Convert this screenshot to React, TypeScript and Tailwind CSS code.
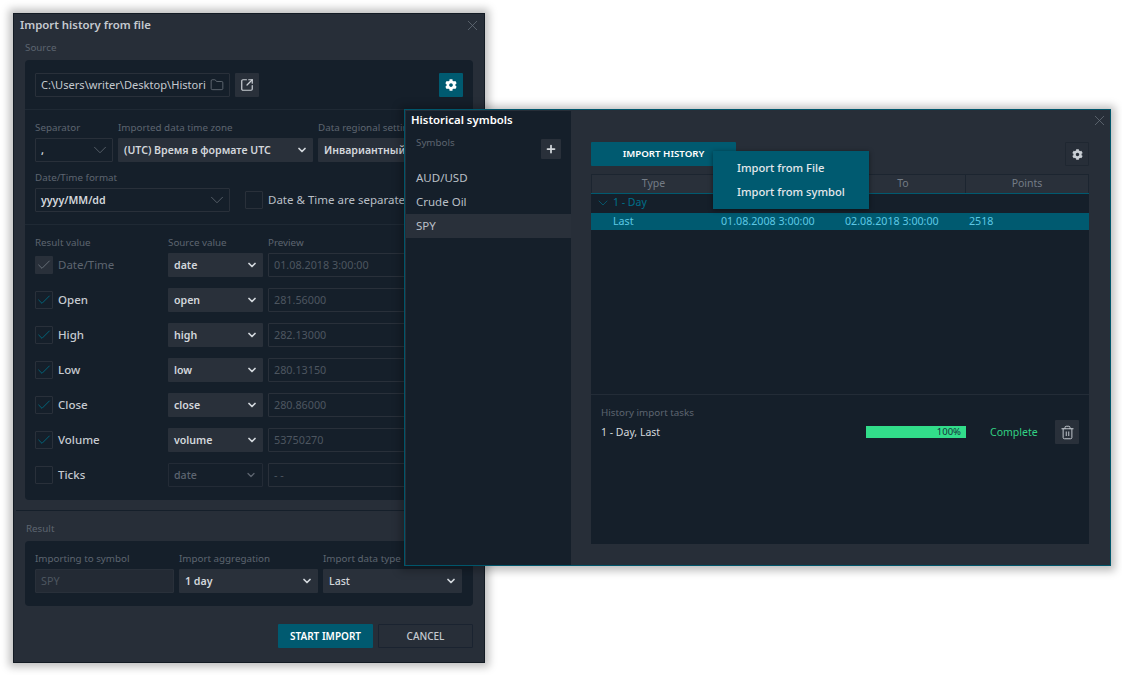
import React from "react";
import { ChevronDown, Check, Folder, SquareArrowOutUpRight, Plus, X, Trash2 } from "lucide-react";
import { FaCog } from "react-icons/fa";

const Lbl = ({ children, className = "" }: { children: React.ReactNode; className?: string }) => (
  <div className={"h-[14px] pt-[1px] text-[9.8px] leading-[14px] text-[#5d6570] whitespace-nowrap " + className}>{children}</div>
);

const Sel = ({ v, w, filled = true, dim = false, bold = true }: { v: string; w: string; filled?: boolean; dim?: boolean; bold?: boolean }) => (
  <div
    className={
      "h-6 shrink-0 flex items-center justify-between rounded-[1px] text-[10.6px] whitespace-nowrap overflow-hidden " +
      w +
      " " +
      (filled ? "bg-[#29303a] pl-[6px] pr-[5px] " : dim ? "border border-[#232b36] pl-[5px] pr-[5px] " : "border border-[#29303a] pl-[5px] pr-[1px] ") +
      (dim ? "text-[#5d6570] " : "text-[#d3d7dc] ") +
      (bold ? "font-semibold" : "font-medium")
    }
  >
    <span className="pt-[1px]">{v}</span>
    {filled || dim ? (
      <ChevronDown size={12} strokeWidth={dim ? 2.5 : 3.5} className={dim ? "text-[#5d6570]" : "text-[#d3d7dc]"} />
    ) : (
      <ChevronDown size={22} strokeWidth={0.8} className="text-[#6b737d]" />
    )}
  </div>
);

const Input = ({ v, w, dim = true }: { v: string; w: string; dim?: boolean }) => (
  <div className={"h-6 shrink-0 flex items-center px-[5px] border border-[#29303a] rounded-[1px] text-[10.8px] whitespace-nowrap overflow-hidden " + w + (dim ? " text-[#4d5660]" : " text-[#d3d7dc]")}>{v}</div>
);

const Box = ({ on = false, disabled = false }: { on?: boolean; disabled?: boolean }) => (
  <div className={"w-[18px] h-[18px] shrink-0 flex items-center justify-center rounded-[1px] " + (disabled ? "bg-[#29303a]" : "border border-[#29303a]")}>
    {on && <Check size={16} strokeWidth={1.4} className={disabled ? "text-[#6b737d]" : "text-[#00697f]"} />}
  </div>
);

const IconBtn = ({ children, teal = false, outline = false }: { children: React.ReactNode; teal?: boolean; outline?: boolean }) => (
  <div className={"w-6 h-6 shrink-0 flex items-center justify-center rounded-[1px] " + (teal ? "bg-[#005a70] text-white" : outline ? "border border-[#1f2731] text-[#c9ced4]" : "bg-[#29303a] text-[#c9ced4]")}>{children}</div>
);

const rows: [string, string, string, boolean, boolean][] = [
  ["Date/Time", "date", "01.08.2018 3:00:00", true, true],
  ["Open", "open", "281.56000", true, false],
  ["High", "high", "282.13000", true, false],
  ["Low", "low", "280.13150", true, false],
  ["Close", "close", "280.86000", true, false],
  ["Volume", "volume", "53750270", true, false],
];

function ImportDialog() {
  return (
    <div className="absolute left-[13px] top-[13px] w-[472px] h-[650px] bg-[#272e38] border border-[#131b24] shadow-[0_0_8px_4px_rgba(0,0,0,0.25)] flex flex-col">
      <div className="h-[22px] flex items-center justify-between pl-[6px] pr-[3px]">
        <span className="text-[11.4px] font-semibold text-[#c5cad0] whitespace-nowrap">Import history from file</span>
        <X size={17} strokeWidth={1} className="text-[#6d757f]" />
      </div>
      <Lbl className="ml-[11px] mt-[4px]">Source</Lbl>
      <div className="mx-[11px] mt-[6px] h-[440px] bg-[#151f2a] rounded-[4px] flex flex-col">
        <div className="h-[50px] shrink-0 flex items-center gap-[5px] px-[10px] border-b border-[#1f2934] pt-[1px]">
          <div className="w-[195px] h-6 flex items-center justify-between pl-[5px] pr-[5px] border border-[#29303a] rounded-[1px] text-[11.1px] text-[#c5cad0] whitespace-nowrap overflow-hidden">
            <span>C:\Users\writer\Desktop\Histori</span>
            <Folder size={14} strokeWidth={1} className="text-[#8d949c] shrink-0" />
          </div>
          <IconBtn><SquareArrowOutUpRight size={14} strokeWidth={2.1} /></IconBtn>
          <div className="flex-1" />
          <IconBtn teal><FaCog size={12} /></IconBtn>
        </div>
        <div className="h-[115px] shrink-0 px-[10px] pt-[10px] border-b border-[#1f2934] overflow-hidden">
          <div className="flex gap-[5px]">
            <div className="w-[78px] shrink-0"><Lbl>Separator</Lbl><Sel v="," w="w-[78px] mt-[4px]" filled={false} /></div>
            <div className="w-[195px] shrink-0"><Lbl>Imported data time zone</Lbl><Sel v="(UTC) Время в формате UTC" w="w-[195px] mt-[4px]" /></div>
            <div className="w-[150px] shrink-0"><Lbl>Data regional settings</Lbl><Sel v="Инвариантный" w="w-[150px] mt-[4px]" /></div>
          </div>
          <Lbl className="mt-[8px]">Date/Time format</Lbl>
          <div className="flex items-center mt-[4px]">
            <Sel v="yyyy/MM/dd" w="w-[195px]" filled={false} />
            <div className="ml-[15px]"><Box /></div>
            <span className="ml-[5px] text-[11.5px] text-[#b9bfc6] whitespace-nowrap">Date &amp; Time are separate</span>
          </div>
        </div>
        <div className="px-[10px] pt-[10px] flex flex-col">
          <div className="flex h-[14px] mb-[4px]">
            <Lbl className="w-[133px]">Result value</Lbl>
            <Lbl className="w-[100px]">Source value</Lbl>
            <Lbl>Preview</Lbl>
          </div>
          <div className="flex flex-col gap-[11px]">
            {rows.map(([a, b, c, on, dis]) => (
              <div key={a} className="h-6 flex items-center">
                <div className="w-[133px] flex items-center gap-[5px]">
                  <Box on={on} disabled={dis} />
                  <span className={"text-[11.5px] " + (dis ? "text-[#5d6570]" : "font-medium text-[#c5cad0]")}>{a}</span>
                </div>
                <Sel v={b} w="w-[95px]" />
                <Input v={c} w="w-[150px] ml-[5px]" />
              </div>
            ))}
            <div className="h-6 flex items-center">
              <div className="w-[133px] flex items-center gap-[5px]">
                <Box />
                <span className="text-[11.5px] font-medium text-[#c5cad0]">Ticks</span>
              </div>
              <Sel v="date" w="w-[95px]" filled={false} dim bold={false} />
              <Input v="- -" w="w-[150px] ml-[5px]" />
            </div>
          </div>
        </div>
      </div>
      <div className="mt-[10px] mx-[2px] border-t border-[#151f2a]" />
      <Lbl className="ml-[12px] mt-[10px]">Result</Lbl>
      <div className="mx-[11px] mt-[6px] h-[65px] bg-[#151f2a] rounded-[4px] px-[10px] pt-[10px] flex gap-[5px]">
        <div><Lbl>Importing to symbol</Lbl><Input v="SPY" w="w-[139px] mt-[4px] bg-[#232a34]" /></div>
        <div><Lbl>Import aggregation</Lbl><Sel v="1 day" w="w-[139px] mt-[4px]" /></div>
        <div><Lbl>Import data type</Lbl><Sel v="Last" w="w-[139px] mt-[4px]" bold={false} /></div>
      </div>
      <div className="mt-[18px] mr-[11px] flex justify-end gap-[5px]">
        <div className="w-[95px] h-6 bg-[#005a70] rounded-[1px] flex items-center justify-center text-[10px] font-semibold text-white whitespace-nowrap">START IMPORT</div>
        <div className="w-[95px] h-6 border border-[#1a2330] rounded-[1px] flex items-center justify-center text-[10px] font-medium text-[#c5cad0] whitespace-nowrap">CANCEL</div>
      </div>
    </div>
  );
}

const symbols = ["AUD/USD", "Crude Oil", "SPY"];

function HistoricalDialog() {
  return (
    <div className="absolute left-[404px] top-[109px] w-[707px] h-[457px] bg-[#272e38] border border-[#00566b] shadow-[0_1px_8px_4px_rgba(0,0,0,0.25)] flex">
      <div className="w-[165px] ml-[1px] mt-[1px] bg-[#151f2a] flex flex-col shrink-0">
        <div className="pl-[5px] pt-[1px] text-[11.4px] leading-[16px] font-semibold text-white whitespace-nowrap">Historical symbols</div>
        <div className="flex items-start justify-between pl-[10px] pr-[10px] mt-[7px] h-[31px]">
          <Lbl>Symbols</Lbl>
          <div className="w-5 h-5 mt-[4px] bg-[#29303a] rounded-[1px] flex items-center justify-center text-[#d3d7dc]"><Plus size={12} strokeWidth={3.5} /></div>
        </div>
        {symbols.map((s) => (
          <div key={s} className={"h-6 flex items-center pl-[10px] text-[11.5px] text-[#b9bfc6] " + (s === "SPY" ? "bg-[#29303a]" : "")}>{s}</div>
        ))}
      </div>
      <div className="flex-1 min-w-0 relative flex flex-col pl-[20px] pr-[21px]">
        <div className="absolute right-[2px] top-[2px]"><X size={17} strokeWidth={1} className="text-[#6d757f]" /></div>
        <div className="mt-[32px] h-6 flex justify-between shrink-0">
          <div className="w-[145px] bg-[#005a70] rounded-[1px] flex items-center justify-center text-[9.7px] font-semibold text-white">IMPORT HISTORY</div>
          <IconBtn outline><FaCog size={11} /></IconBtn>
        </div>
        <div className="mt-[8px] h-[370px] bg-[#151f2a] flex flex-col shrink-0">
          <div className="h-[19px] shrink-0 flex bg-[#29303a] border border-[#1c2530] border-b-0 text-[10.5px] text-[#747c86]">
            <div className="w-[124px] flex items-center justify-center border-r border-[#1c2530]">Type</div>
            <div className="w-[125px] border-r border-[#1c2530]" />
            <div className="w-[125px] flex items-center justify-center border-r border-[#1c2530]">To</div>
            <div className="flex-1 flex items-center justify-center">Points</div>
          </div>
          <div className="h-[1px] bg-[#005a70]" />
          <div className="h-[18px] flex items-center pl-[4px] gap-[2px] text-[10.5px] text-[#00708a]">
            <ChevronDown size={16} strokeWidth={1} />
            <span>1 - Day</span>
          </div>
          <div className="h-[17px] mt-[1px] bg-[#005a70] flex items-center text-[10.7px] text-[#5dc8e4] whitespace-nowrap">
            <div className="w-[130px] pl-[22px]">Last</div>
            <div className="w-[124px]">01.08.2008 3:00:00</div>
            <div className="w-[124px]">02.08.2018 3:00:00</div>
            <div>2518</div>
          </div>
          <div className="h-[165px] shrink-0 border-b border-[#232c37]" />
          <div className="pl-[10px] pr-[10px] pt-[10px]">
            <Lbl>History import tasks</Lbl>
            <div className="flex items-center h-6 mt-[1px]">
              <span className="w-[265px] text-[10.5px] text-[#d3d7dc] whitespace-nowrap pt-[2px]">1 - Day, Last</span>
              <div className="w-[100px] h-3 bg-[#32dd8a] flex items-center justify-end pr-[5px] text-[9.5px] text-[#17303a]">100%</div>
              <span className="ml-6 w-[65px] text-[10.5px] text-[#32d184] pt-[1px]">Complete</span>
              <IconBtn><Trash2 size={15} strokeWidth={1.5} /></IconBtn>
            </div>
          </div>
        </div>
        <div className="absolute left-[142px] top-[41px] w-[156px] h-[58px] bg-[#005a70] shadow-[0_1px_5px_rgba(0,0,0,0.45)] py-[5px] pl-[24px] text-[11.2px] font-medium text-[#e4e8ec] whitespace-nowrap">
          <div className="h-6 flex items-center">Import from File</div>
          <div className="h-6 flex items-center">Import from symbol</div>
        </div>
      </div>
    </div>
  );
}

export default function App() {
  return (
    <div className="relative w-[1122px] h-[675px] bg-white overflow-hidden" style={{ fontFamily: '"Noto Sans", sans-serif' }}>
      <ImportDialog />
      <HistoricalDialog />
    </div>
  );
}
